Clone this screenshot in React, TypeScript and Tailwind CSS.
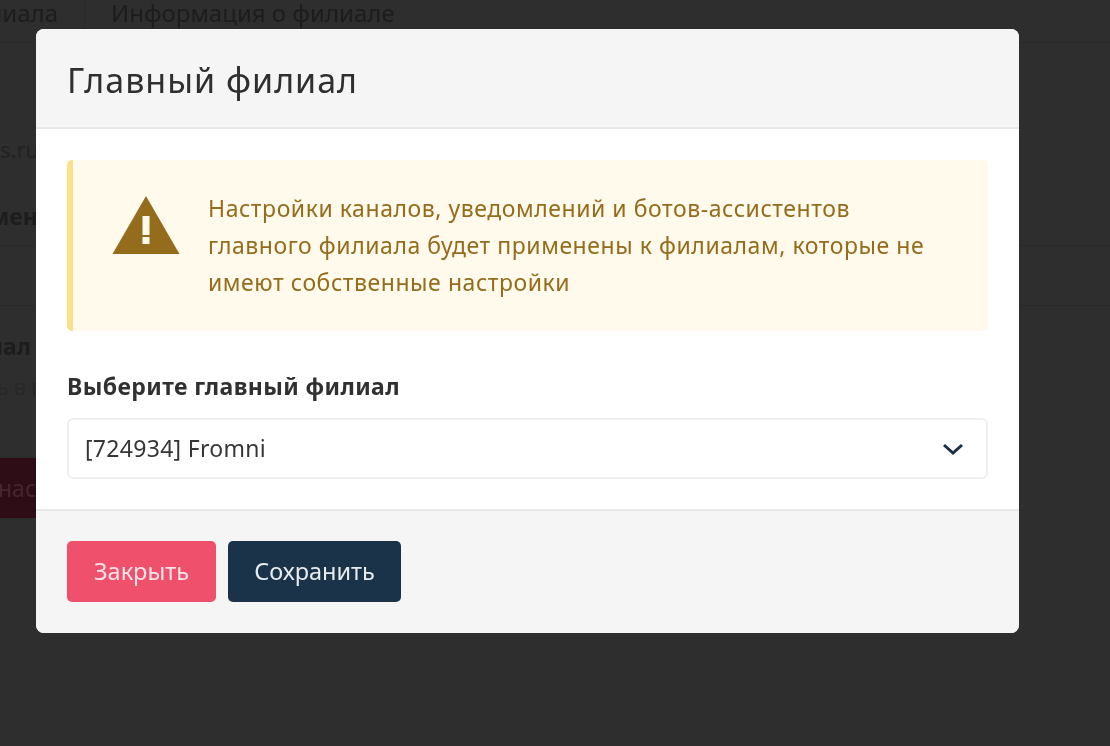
export default function App() {
  const font = { fontFamily: '"Noto Sans", "Open Sans", sans-serif' };
  return (
    <div style={font} className="relative h-[746px] w-[1110px] overflow-hidden bg-[#2e2e2e] blur-[0.4px]">
      {/* Dimmed page behind the modal */}
      <div className="h-full w-full text-[#1d1d1d]">
        <div className="flex h-[43px] items-start border-b border-[#2a2a2a] text-[24px] leading-[25px]">
          <span className="flex w-[85px] justify-end overflow-hidden whitespace-nowrap border-r border-[#292929] pb-[20px] pr-[26px]">филиала</span>
          <span className="pl-[26px]">Информация о филиале</span>
        </div>
        <div className="mt-[91px] h-[44px] text-[22px] leading-[30px] text-[#222222]">s.ru</div>
        <div className="h-[68px] border-b border-[#2a2a2a] pt-[23px] text-[23px] font-bold leading-[30px]">
          <span className="-ml-[10px] block">мен</span>
        </div>
        <div className="mt-[59px] h-[38px] border-t border-[#2a2a2a] pt-[25px] text-[23px] font-bold leading-[30px]">
          <span className="-ml-[12px] block">нал</span>
        </div>
        <div className="mt-[30px] text-[21px] leading-[28px] text-[#272727]">
          <span className="-ml-[3px] block">ь в п</span>
        </div>
        <div className="mt-[57px] flex h-[60px] w-[60px] items-center bg-[#2e0d17] text-[23px] text-[#47252f]">
          <span className="-ml-[2px]">нас</span>
        </div>
      </div>

      {/* Modal */}
      <div className="absolute left-[36px] top-[29px] flex h-[604px] w-[983px] flex-col overflow-hidden rounded-[8px] bg-white">
        <div className="flex h-[100px] shrink-0 items-center border-b-2 border-[#e8e8e8] bg-[#f5f5f5] px-[31px] pt-[3px]">
          <h1 className="text-[34px] font-normal leading-[40px] tracking-[1px] text-[#2f2f2f]">Главный филиал</h1>
        </div>
        <div className="flex-1 px-[31px] pt-[31px]">
          <div className="flex h-[171px] items-center rounded-[5px] border-l-[6px] border-[#ffe08a] bg-[#fffaeb] pl-[39px] pr-[40px]">
            <svg viewBox="0 0 68 60" className="mb-[41px] h-[60px] w-[68px] shrink-0" aria-hidden="true">
              <path fill="#946c1c" d="M34 1 L67.5 59 H0.5 Z" />
              <rect x="30.5" y="21" width="7" height="19" fill="#fffaeb" />
              <rect x="30.5" y="42" width="7" height="7" fill="#fffaeb" />
            </svg>
            <p className="ml-[28px] text-[23px] leading-[37px] tracking-[0.55px] text-[#946c1c]">
              Настройки каналов, уведомлений и ботов-ассистентов
              <br />
              главного филиала будет применены к филиалам, которые не
              <br />
              имеют собственные настройки
            </p>
          </div>
          <div className="mt-[40px] text-[23px] font-bold leading-[30px] tracking-[0.4px] text-[#303030]">Выберите главный филиал</div>
          <div className="mt-[17px] flex h-[61px] items-center justify-between rounded-[6px] border-2 border-[#efefef] bg-white pl-[16px] pr-[22px]">
            <span className="text-[23px] tracking-[0.3px] text-[#363636]">[724934] Fromni</span>
            <svg viewBox="0 0 22 14" className="h-[14px] w-[22px]" fill="none" aria-hidden="true">
              <path d="M2 3 L11 11 L20 3" stroke="#1a2f45" strokeWidth="3" />
            </svg>
          </div>
        </div>
        <div className="flex h-[124px] shrink-0 items-start gap-[12px] border-t-2 border-[#e8e8e8] bg-[#f5f5f5] px-[31px] pt-[30px]">
          <button className="h-[61px] w-[149px] rounded-[5px] bg-[#ef506c] pt-[1px] text-[23.5px] text-[#fde4e9]">Закрыть</button>
          <button className="h-[61px] w-[173px] rounded-[5px] bg-[#1b3348] pt-[1px] text-[23.5px] text-[#e6ebf0]">Сохранить</button>
        </div>
      </div>
    </div>
  );
}
